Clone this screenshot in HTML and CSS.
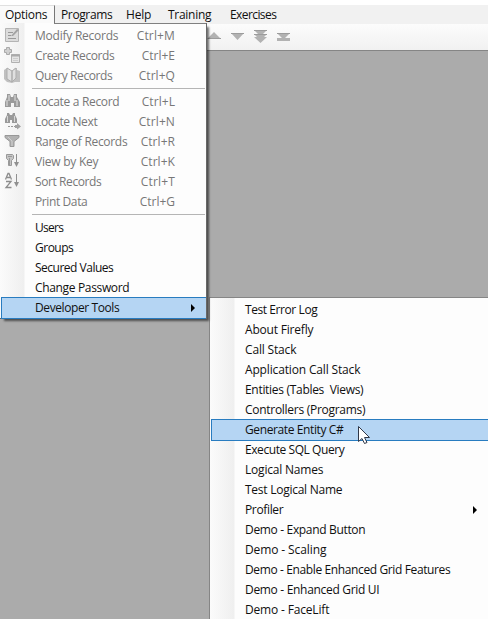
FILE: index.html
```html
<!DOCTYPE html>
<html lang="en">
<head>
<meta charset="utf-8">
<title>Options menu</title>
<link rel="stylesheet" href="styles.css">
</head>
<body>
<div class="app">
<nav class="menubar">
<span class="tab open"><span data-w="42">Options</span></span>
<span class="tab programs"><span data-w="51">Programs</span></span>
<span class="tab help"><span data-w="25">Help</span></span>
<span class="tab training"><span data-w="43">Training</span></span>
<span class="tab"><span data-w="46">Exercises</span></span>
</nav>
<div class="toolbar">
<svg width="90" height="14" viewBox="0 0 90 14" fill="#b2b2b2"><path d="M0 10 7 3l7 7zM24 4h13l-6.500 7zM47 1h13l-4 4h4l-3 3h3l-6.500 6L47 8h3l-3-3h4zM70 4h13l-5 5h5v3H70V9h5z"/><path d="M24 4.500h13M47 1.500h13M47 5.500h13M70 4.500h13M1 9.500h13" stroke="#9c9c9c" fill="none"/></svg>
</div>
<div class="menu options">
<div class="row off"><svg class="icon" viewBox="0 0 18 18"><path d="M2.500 2.500h13v13h-13z" fill="#dcdcdc" stroke="#b4b4b4"/><path d="M5 6.500h5M5 9.500h3M5 12.500h8" stroke="#999"/><path d="m8 10 6-7 2 1-6 6z" fill="#a2a2a2"/></svg><span data-w="83">Modify Records</span><kbd data-w="38">Ctrl+M</kbd></div>
<div class="row off"><svg class="icon" viewBox="0 0 18 18"><path d="M3.500 1.500h3v2h2v3h-2v2h-3v-2h-2v-3h2z" fill="#d0d0d0" stroke="#aaa"/><path d="M8.500 8.500h8v8h-8z" fill="#e4e4e4" stroke="#b0b0b0"/><path d="M8 9.500h9" stroke="#aaa" stroke-width="2"/><path d="M10 12.500h5m-5 2h5" stroke="#ccc"/></svg><span data-w="79">Create Records</span><kbd data-w="33">Ctrl+E</kbd></div>
<div class="row off"><svg class="icon" viewBox="0 0 18 18"><path d="m1 4 3-2 5 3 3-3h2v2l3 1v11h-5l-3 1-5-1-3-3z" fill="#c0c0c0"/><path d="m4 2 5 3v11l-5-3zM9 5l4-3v10l-4 4z" fill="#e0e0e0" stroke="#adadad"/></svg><span data-w="77">Query Records</span><kbd data-w="36">Ctrl+Q</kbd></div>
<div class="sep"></div>
<div class="row off"><svg class="icon" viewBox="0 0 18 18"><path d="M4 2h3l1 3h2l1-3h3v3l3 5v5h-6v-4H8v4H2v-5l2-5z" fill="#9a9a9a"/><path d="M4 8v6M6 3v6M12 3v6M14 8v6" stroke="#d2d2d2" stroke-width="1.300"/></svg><span data-w="84">Locate a Record</span><kbd data-w="33">Ctrl+L</kbd></div>
<div class="row off"><svg class="icon" viewBox="0 0 18 18"><path d="M4 1h2l1 2h2l1-2h2v2l2 4v4H9V8H7v3H2V7l2-4z" fill="#9a9a9a"/><path d="M4.500 4v6M11.500 4v6" stroke="#d5d5d5"/><path d="M5 14.500h2m1 0h2m1 0h3" stroke="#999"/><path d="M12 13h2v-2l4 3.500-4 3V16h-2z" fill="#a2a2a2"/></svg><span data-w="62">Locate Next</span><kbd data-w="36">Ctrl+N</kbd></div>
<div class="row off"><svg class="icon" viewBox="0 0 18 18"><path d="M2 3.500h14v2l-5 4v5H7v-5l-5-4z" fill="#b2b2b2" stroke="#989898"/><path d="m5 5 4 4v5" stroke="#d0d0d0" fill="none"/></svg><span data-w="92">Range of Records</span><kbd data-w="34">Ctrl+R</kbd></div>
<div class="row off"><svg class="icon" viewBox="0 0 18 18"><path d="M3.500 2.500h6l1 1v3l-2 2v5h-3v-5l-2-2z" fill="#c5c5c5" stroke="#999"/><path d="M5 4.500h4M6.500 6v7" stroke="#999"/><path d="M13.500 2v10" stroke="#909090"/><path d="M11 10h5l-2.500 5z" fill="#909090"/></svg><span data-w="63">View by Key</span><kbd data-w="34">Ctrl+K</kbd></div>
<div class="row off"><svg class="icon" viewBox="0 0 18 18"><path d="m2.500 7.500 2.500-6h1l2.500 6M4 5.500h3M3 9.500h5l-5 6h5.500" stroke="#8d8d8d" stroke-width="1.300" fill="none"/><path d="M13.500 2v10" stroke="#909090"/><path d="M11 10h5l-2.500 5z" fill="#909090"/></svg><span data-w="66">Sort Records</span><kbd data-w="34">Ctrl+T</kbd></div>
<div class="row off"><span data-w="52">Print Data</span><kbd data-w="35">Ctrl+G</kbd></div>
<div class="sep"></div>
<div class="row"><span data-w="28">Users</span></div>
<div class="row"><span data-w="38">Groups</span></div>
<div class="row"><span data-w="78">Secured Values</span></div>
<div class="row"><span data-w="94">Change Password</span></div>
<div class="row active"><span data-w="84">Developer Tools</span><i class="arrow"></i></div>
</div>
<div class="menu sub">
<div class="row"><span data-w="72">Test Error Log</span></div>
<div class="row"><span data-w="68">About Firefly</span></div>
<div class="row"><span data-w="51">Call Stack</span></div>
<div class="row"><span data-w="115">Application Call Stack</span></div>
<div class="row"><span data-w="118">Entities (Tables&nbsp; Views)</span></div>
<div class="row"><span data-w="120">Controllers (Programs)</span></div>
<div class="row active"><span data-w="98">Generate Entity C#</span></div>
<div class="row"><span data-w="99">Execute SQL Query</span></div>
<div class="row"><span data-w="78">Logical Names</span></div>
<div class="row"><span data-w="97">Test Logical Name</span></div>
<div class="row"><span data-w="38">Profiler</span><i class="arrow"></i></div>
<div class="row"><span data-w="120">Demo - Expand Button</span></div>
<div class="row"><span data-w="81">Demo - Scaling</span></div>
<div class="row"><span data-w="205">Demo - Enable Enhanced Grid Features</span></div>
<div class="row"><span data-w="134">Demo - Enhanced Grid UI</span></div>
<div class="row"><span data-w="84">Demo - FaceLift</span></div>
</div>
<svg class="cursor" width="14" height="20" viewBox="0 0 14 20"><path d="M1.500 1.500v15l3.500-3 2.500 5 2.500-1-2.500-5h5z" fill="#fff" stroke="#303848"/></svg>
</div>
<script src="labels.js"></script>
</body>
</html>
```
FILE: styles.css
```css
* { box-sizing: border-box; }
body { margin: 0; font: 12px/20px "Open Sans", "Noto Sans", sans-serif; color: #101010; }
.app { position: relative; width: 488px; height: 619px; overflow: hidden; background: #ababab; padding-top: 5px; }
.app::before { content: ""; position: absolute; top: 0; left: 0; width: 100%; height: 5px; background: #fff; }
[data-w] { white-space: pre; }
.menubar { display: flex; height: 19px; background: #f1f1f1; }
.tab { height: 19px; line-height: 20px; }
.tab.open { width: 55px; padding-left: 5px; margin-right: 6px; background: #fafafa; border-top: 1px solid #e0e0e0; border-right: 1px solid #777; line-height: 18px; }
.programs { width: 65px; }
.help { width: 42px; }
.training { width: 62px; }
.toolbar { height: 27px; padding: 5px 0 0 207px; background: linear-gradient(#fcfcfc, #f1f1f1); border-bottom: 1px solid #858585; }
.toolbar svg { display: block; }
.menu { position: absolute; background: linear-gradient(90deg, #fbfbfb, #efefef 24px, #fdfdfd 25px); }
.options { z-index: 2; left: 0; top: 23px; width: 207px; height: 296px; padding-top: 3px; border-right: 1px solid #686868; border-bottom: 1px solid #686868; box-shadow: 3px 3px 2px -1px rgba(0,0,0,.55); }
.options::before { content: ""; position: absolute; left: 54px; right: 0; top: 0; height: 1px; background: #808080; }
.row { position: relative; display: flex; align-items: center; height: 20px; padding-left: 35px; }
.off { color: #777; }
.icon { position: absolute; left: 3px; top: 0; width: 18px; height: 18px; }
kbd { font: inherit; margin-left: auto; margin-right: 31px; }
.sep { height: 6px; border-top: 1px solid #b5b5b5; margin-left: 32px; margin-right: 1px; transform: translateY(2px); }
.active { z-index: 0; }
.active::before { content: ""; position: absolute; z-index: -1; left: 1px; right: 0; top: -1px; height: 20px; background: #b5d5f3; border: 1px solid #287cc0; border-right: 0; }
.arrow { margin-left: auto; margin-right: 11px; border-left: 4px solid #000; border-top: 4px solid transparent; border-bottom: 4px solid transparent; }
.sub { left: 209px; top: 297px; width: 279px; height: 322px; padding-top: 2px; border-top: 1px solid #858585; border-left: 1px solid #858585; }
.cursor { position: absolute; left: 357px; top: 425px; z-index: 3; }
```
FILE: labels.js
```js
// Spread each label over its column width.
document.querySelectorAll("[data-w]").forEach(function (el) {
  var range = document.createRange();
  range.selectNodeContents(el);
  var gap = (Number(el.dataset.w) + 0.3 - range.getBoundingClientRect().width) / el.textContent.length;
  el.style.letterSpacing = gap.toFixed(3) + "px";
});
```
